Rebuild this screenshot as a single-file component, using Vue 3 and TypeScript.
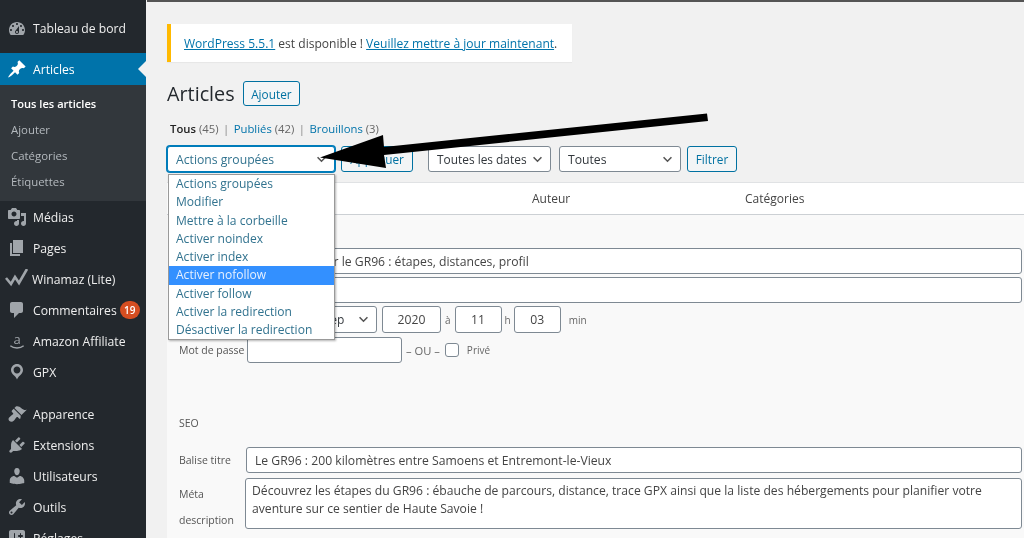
<script setup lang="ts">
interface MenuItem {
  label: string
  icon?: string
  badge?: string
  gapBefore?: boolean
}

const icons: Record<string, string> = {
  dashboard: 'M3.76 16h12.48c1.1-1.37 1.76-3.11 1.76-5 0-4.42-3.58-8-8-8s-8 3.58-8 8c0 1.89.66 3.63 1.76 5zM10 4c.55 0 1 .45 1 1s-.45 1-1 1-1-.45-1-1 .45-1 1-1zM6 6c.55 0 1 .45 1 1s-.45 1-1 1-1-.45-1-1 .45-1 1-1zm8 0c.55 0 1 .45 1 1s-.45 1-1 1-1-.45-1-1 .45-1 1-1zm-5.37 5.55L12 7v6c0 1.1-.9 2-2 2s-2-.9-2-2c0-.57.24-1.08.63-1.45zM4 10c.55 0 1 .45 1 1s-.45 1-1 1-1-.45-1-1 .45-1 1-1zm12 0c.55 0 1 .45 1 1s-.45 1-1 1-1-.45-1-1 .45-1 1-1zm-5 3c0-.55-.45-1-1-1s-1 .45-1 1 .45 1 1 1 1-.45 1-1z',
  pin: 'M10.44 3.02l1.82-1.82 6.36 6.35-1.83 1.82c-1.05-.68-2.48-.57-3.41.36l-.75.75c-.92.93-1.04 2.35-.35 3.41l-1.83 1.82-2.41-2.41-2.8 2.79c-.42.42-3.38 2.71-3.8 2.29s1.86-3.39 2.28-3.81l2.79-2.79L4.1 9.36l1.83-1.82c1.05.69 2.48.57 3.4-.36l.75-.75c.93-.92 1.05-2.35.36-3.41z',
  media: 'M13 11V4c0-.55-.45-1-1-1h-1.67L9 1H5L3.67 3H2c-.55 0-1 .45-1 1v7c0 .55.45 1 1 1h10c.55 0 1-.45 1-1zM7 4.5c1.38 0 2.5 1.12 2.5 2.5S8.38 9.5 7 9.5 4.5 8.38 4.5 7 5.62 4.5 7 4.5zM14 6h5v10.5c0 1.38-1.12 2.5-2.5 2.5S14 17.88 14 16.5s1.12-2.5 2.5-2.5c.17 0 .34.02.5.05V9h-3V6zm-4 8.05V13h2v3.5c0 1.38-1.12 2.5-2.5 2.5S7 17.88 7 16.5 8.12 14 9.5 14c.17 0 .34.02.5.05z',
  page: 'M6 15V2h10v13H6zm-1 1h8v2H3V5h2v11z',
  comment: 'M5 2h9c1.1 0 2 .9 2 2v7c0 1.1-.9 2-2 2h-2l-5 5v-5H5c-1.1 0-2-.9-2-2V4c0-1.1.9-2 2-2z',
  location: 'M10 2C6.69 2 4 4.69 4 8c0 2.02 1.17 3.71 2.53 4.89.43.37 1.18.96 1.85 1.83.74.97 1.41 2.01 1.62 2.71.21-.7.88-1.74 1.62-2.71.67-.87 1.42-1.46 1.85-1.83C14.83 11.71 16 10.02 16 8c0-3.31-2.69-6-6-6zm0 2.56c1.9 0 3.44 1.54 3.44 3.44S11.9 11.44 10 11.44 6.56 9.9 6.56 8 8.1 4.56 10 4.56z',
  brush: 'M14.48 11.06L7.41 3.99l1.5-1.5c.5-.56 2.3-.47 3.51.32 1.21.8 1.43 1.28 2.91 2.1 1.18.64 2.45 1.26 4.45.85zm-.71.71L6.7 4.7 4.93 6.47c-.39.39-.39 1.02 0 1.41l1.06 1.06c.39.39.39 1.03 0 1.42-.6.6-1.43 1.11-2.21 1.69-.35.26-.7.53-1.01.84C1.43 13.71.96 15.65 2.39 17s3.3.88 4.62-.44c.31-.31.58-.66.84-1.01.58-.78 1.09-1.61 1.69-2.21.39-.39 1.02-.39 1.41 0l1.06 1.06c.39.39 1.02.39 1.41 0z',
  plugin: 'M13.11 4.36L9.87 7.6 8 5.73l3.24-3.24c.35-.34 1.05-.2 1.56.32.52.51.66 1.21.31 1.55zm-8 1.77l.91-1.12 9.01 9.01-1.19.84c-.71.71-2.63 1.16-3.82 1.16H6.14L4.9 17.26c-.59.59-1.54.59-2.12 0-.59-.58-.59-1.53 0-2.12l1.24-1.24v-3.88c0-1.13.4-3.19 1.09-3.89zm7.26 3.97l3.24-3.24c.34-.35 1.04-.21 1.55.31.52.51.66 1.21.31 1.55l-3.24 3.25z',
  user: 'M10 9.25c-2.27 0-2.73-3.44-2.73-3.44C7 4.02 7.82 2 9.97 2c2.16 0 2.98 2.02 2.71 3.81 0 0-.41 3.44-2.68 3.44zm0 2.57L12.72 10c2.39 0 4.52 2.33 4.52 4.53v2.49s-3.65 1.13-7.24 1.13c-3.65 0-7.24-1.13-7.24-1.13v-2.49c0-2.25 1.94-4.48 4.47-4.48z',
  tool: 'M16.68 9.77c-1.34 1.34-3.3 1.67-4.95.99l-5.41 6.52c-.99.99-2.59.99-3.58 0s-.99-2.59 0-3.57l6.52-5.42c-.68-1.65-.35-3.61.99-4.95 1.28-1.28 3.12-1.62 4.72-1.06l-2.89 2.89 2.82 2.82 2.86-2.87c.53 1.58.18 3.39-1.08 4.65zM3.81 16.21c.4.39 1.04.39 1.43 0 .4-.4.4-1.04 0-1.43-.39-.4-1.03-.4-1.43 0-.39.39-.39 1.03 0 1.43z',
  settings: 'M18 16V4c0-1.1-.9-2-2-2H4c-1.1 0-2 .9-2 2v12c0 1.1.9 2 2 2h12c1.1 0 2-.9 2-2zM8 11h1c.55 0 1 .45 1 1s-.45 1-1 1H8v1.5c0 .28-.22.5-.5.5s-.5-.22-.5-.5V13H6c-.55 0-1-.45-1-1s.45-1 1-1h1V5.500c0-.28.22-.5.5-.5s.5.22.5.5V11zm5-2h-1c-.55 0-1-.45-1-1s.45-1 1-1h1V5.500c0-.28.22-.5.5-.5s.5.22.5.5V7h1c.55 0 1 .45 1 1s-.45 1-1 1h-1v5.500c0 .28-.22.5-.5.5s-.5-.22-.5-.5V9z',
}

const lowerMenu: MenuItem[] = [
  { label: 'Médias', icon: 'media' },
  { label: 'Pages', icon: 'page' },
  { label: 'Winamaz (Lite)', icon: 'check' },
  { label: 'Commentaires', icon: 'comment', badge: '19' },
  { label: 'Amazon Affiliate', icon: 'amazon' },
  { label: 'GPX', icon: 'location' },
  { label: 'Apparence', icon: 'brush', gapBefore: true },
  { label: 'Extensions', icon: 'plugin' },
  { label: 'Utilisateurs', icon: 'user' },
  { label: 'Outils', icon: 'tool' },
  { label: 'Réglages', icon: 'settings' },
]

const subMenu = ['Tous les articles', 'Ajouter', 'Catégories', 'Étiquettes']

const bulkOptions = [
  'Actions groupées',
  'Modifier',
  'Mettre à la corbeille',
  'Activer noindex',
  'Activer index',
  'Activer nofollow',
  'Activer follow',
  'Activer la redirection',
  'Désactiver la redirection',
]
</script>

<template>
  <div class="page">
    <aside class="sidebar">
      <a class="menu-item first">
        <svg class="icon" viewBox="0 0 20 20"><path :d="icons.dashboard" /></svg>
        <span>Tableau de bord</span>
      </a>
      <a class="menu-item current">
        <svg class="icon" viewBox="0 0 20 20"><path :d="icons.pin" /></svg>
        <span>Articles</span>
      </a>
      <div class="submenu">
        <a v-for="(s, i) in subMenu" :key="s" :class="{ on: i === 0 }">{{ s }}</a>
      </div>
      <a
        v-for="m in lowerMenu"
        :key="m.label"
        class="menu-item"
        :class="{ spaced: m.gapBefore }"
      >
        <svg v-if="m.icon === 'check'" class="icon wide" viewBox="0 0 24 20">
          <path d="M1 9l5 6 4-7 4 6 8-14" fill="none" stroke="#a0a5aa" stroke-width="2.6" />
        </svg>
        <span v-else-if="m.icon === 'amazon'" class="amazon">
          <b>a</b>
          <svg viewBox="0 0 20 6"><path d="M2 1c4 3.500 12 3.500 16 0" fill="none" stroke="#a0a5aa" stroke-width="1.6" /></svg>
        </span>
        <svg v-else class="icon" viewBox="0 0 20 20"><path :d="icons[m.icon!]" /></svg>
        <span>{{ m.label }}</span>
        <em v-if="m.badge" class="badge">{{ m.badge }}</em>
      </a>
    </aside>

    <main class="content">
      <div class="notice">
        <a>WordPress 5.5.1</a>&nbsp;est disponible ! <a>Veuillez mettre à jour maintenant</a>.
      </div>

      <div class="title-row">
        <h1>Articles</h1>
        <button class="btn">Ajouter</button>
      </div>

      <div class="subsub">
        <b>Tous</b>&nbsp;<i>(45)</i><s>|</s><span class="lnk">Publiés</span>&nbsp;<i>(42)</i><s>|</s><span class="lnk">Brouillons</span>&nbsp;<i>(3)</i>
      </div>

      <div class="tablenav">
        <div class="select focus w-bulk">
          Actions groupées
          <svg viewBox="0 0 12 8"><path d="M1.500 1.500L6 6l4.500-4.500" /></svg>
        </div>
        <button class="btn apply">Appliquer</button>
        <div class="select w-dates">
          Toutes les dates
          <svg viewBox="0 0 12 8"><path d="M1.500 1.500L6 6l4.500-4.500" /></svg>
        </div>
        <div class="select w-cats">
          Toutes
          <svg viewBox="0 0 12 8"><path d="M1.500 1.500L6 6l4.500-4.500" /></svg>
        </div>
        <button class="btn filter">Filtrer</button>
      </div>

      <div class="table-head">
        <span></span>
        <span>Auteur</span>
        <span>Catégories</span>
      </div>

      <div class="edit">
        <div class="row r-title">
          <label></label>
          <input class="field grow" value="Tout savoir sur le GR96 : étapes, distances, profil" />
        </div>
        <div class="row r-slug">
          <label></label>
          <input class="field grow" />
        </div>
        <div class="row r-date">
          <label></label>
          <input class="field w-day" />
          <div class="select w-month">
            09-Sep
            <svg viewBox="0 0 12 8"><path d="M1.500 1.500L6 6l4.500-4.500" /></svg>
          </div>
          <input class="field w-year" value="2020" />
          <small>à</small>
          <input class="field w-time" value="11" />
          <small class="h">h</small>
          <input class="field w-time" value="03" />
          <small class="min">min</small>
        </div>
        <div class="row r-pass">
          <label>Mot de passe</label>
          <input class="field w-pass" />
          <small class="ou">– OU –</small>
          <span class="check"></span>
          <small class="prive">Privé</small>
        </div>

        <div class="seo">SEO</div>

        <div class="row r-seo">
          <label>Balise titre</label>
          <input class="field grow" value="Le GR96 : 200 kilomètres entre Samoens et Entremont-le-Vieux" />
        </div>
        <div class="row r-meta">
          <label class="two-lines"><span>Méta</span><span>description</span></label>
          <textarea class="field grow" rows="2">Découvrez les étapes du GR96 : ébauche de parcours, distance, trace GPX ainsi que la liste des hébergements pour planifier votre aventure sur ce sentier de Haute Savoie !</textarea>
        </div>
      </div>
    </main>

    <!-- opened native dropdown, over the table -->
    <ul class="dropdown">
      <li v-for="o in bulkOptions" :key="o" :class="{ hot: o === 'Activer nofollow' }">{{ o }}</li>
    </ul>

    <!-- hand-drawn arrow added on top of the screenshot -->
    <svg class="arrow" viewBox="0 0 1024 538">
      <path d="M707 113.500L708 121L384 155L386 168L320 157.500L383 135L384 147z" fill="#000" />
    </svg>
  </div>
</template>

<style scoped>
.page {
  position: relative;
  display: flex;
  width: 1024px;
  height: 538px;
  overflow: hidden;
  background: #f1f1f1;
  font-family: "Open Sans", "Liberation Sans", sans-serif;
  font-size: 12.2px;
  color: #444;
  filter: blur(0.3px);
}

/* sidebar */
.sidebar {
  width: 146px;
  flex: none;
  background: #23282d;
  color: #eee;
  padding-top: 13px;
}
.menu-item {
  position: relative;
  display: flex;
  align-items: center;
  height: 31px;
  padding-top: 1px;
  box-sizing: border-box;
  color: #eee;
}
.menu-item.first {
  padding-top: 0;
  margin-bottom: 9px;
}
.menu-item.spaced {
  margin-top: 11px;
}
.menu-item.current {
  height: 32px;
  padding-top: 0;
  background: #0073aa;
  color: #fff;
}
.menu-item.current::after {
  content: "";
  position: absolute;
  right: 0;
  top: 8px;
  border: 8px solid transparent;
  border-right-color: #f1f1f1;
  border-left-width: 0;
}
.icon {
  width: 20px;
  height: 20px;
  margin: 0 6px 0 7px;
  flex: none;
  fill: #a0a5aa;
}
.current .icon {
  fill: #fff;
}
.icon.wide {
  width: 24px;
  margin: 0 3px 0 5px;
}
.amazon {
  width: 20px;
  margin: 0 6px 0 7px;
  display: flex;
  flex-direction: column;
  align-items: center;
  line-height: 12px;
  color: #a0a5aa;
  font-size: 13px;
}
.amazon b {
  font-weight: 400;
}
.amazon svg {
  width: 18px;
  height: 5px;
}
.badge {
  margin-left: 3px;
  width: 20px;
  height: 18px;
  border-radius: 9px;
  background: #d54e21;
  color: #fff;
  font-size: 10px;
  font-style: normal;
  font-weight: 600;
  line-height: 18px;
  text-align: center;
}
.submenu {
  background: #32373c;
  height: 116px;
  padding: 6px 0 6px 11px;
  box-sizing: border-box;
  display: flex;
  flex-direction: column;
}
.submenu a {
  height: 26px;
  line-height: 25px;
  font-size: 11.4px;
  color: #b4b9be;
}
.submenu a.on {
  color: #fff;
  font-size: 11.1px;
  font-weight: 600;
}

/* main column */
.content {
  flex: 1;
  min-width: 0;
  margin-left: 1px;
  padding-left: 20px;
  border-top: 2px solid #555;
  box-sizing: border-box;
}
a,
.lnk {
  color: #0073aa;
}
.notice a {
  text-decoration: underline;
}
.notice {
  width: 405px;
  height: 38px;
  margin-top: 22px;
  box-sizing: border-box;
  display: flex;
  align-items: center;
  padding-left: 13px;
  background: #fff;
  border-left: 4px solid #ffb900;
  box-shadow: 0 1px 1px rgba(0, 0, 0, 0.04);
  font-size: 12.05px;
  white-space: pre;
}
.title-row {
  display: flex;
  align-items: center;
  height: 25px;
  margin-top: 19px;
  gap: 8px;
}
h1 {
  margin: 0;
  font-size: 19.8px;
  font-weight: 400;
  color: #23282d;
}
.btn {
  height: 25px;
  padding: 0 7.5px;
  border: 1px solid #0071a1;
  border-radius: 3px;
  background: #f3f5f6;
  color: #0071a1;
  font: inherit;
  font-size: 11.8px;
}
.subsub {
  display: flex;
  align-items: center;
  height: 16px;
  margin-top: 14px;
  padding-left: 3px;
  font-size: 11.3px;
  white-space: pre;
}
.subsub b {
  font-weight: 600;
  color: #222;
}
.subsub i {
  font-style: normal;
  color: #666;
}
.subsub s {
  margin: 0 4.5px;
  text-decoration: none;
  color: #888;
}
.tablenav {
  display: flex;
  margin-top: 10px;
}
.select {
  position: relative;
  box-sizing: border-box;
  height: 26px;
  line-height: 25px;
  padding-left: 8px;
  background: #fff;
  border: 1px solid #7e8993;
  border-radius: 3px;
  color: #32373c;
  white-space: nowrap;
}
.select svg {
  position: absolute;
  right: 7px;
  top: 9px;
  width: 11px;
  height: 7px;
  fill: none;
  stroke: #555;
  stroke-width: 1.8;
}
.select.focus {
  border-color: #007cba;
  color: #32738f;
  box-shadow: 0 0 0 1px #007cba;
}
.w-bulk {
  width: 168px;
}
.apply {
  width: 72px;
  height: 26px;
  margin-left: 6px;
  padding: 0;
}
.w-dates {
  width: 123px;
  margin-left: 15px;
  font-size: 11.9px;
}
.w-cats {
  width: 122px;
  margin-left: 8px;
}
.filter {
  width: 50px;
  height: 26px;
  margin-left: 6px;
  padding: 0;
}
.table-head {
  display: grid;
  grid-template-columns: 365px 213px 1fr;
  align-items: center;
  height: 33px;
  margin-top: 10px;
  background: #fff;
  border-top: 1px solid #e0e2e4;
  border-bottom: 1px solid #ccd0d4;
  box-sizing: border-box;
  font-size: 12px;
}

/* inline edit */
.edit {
  height: 324px;
  padding: 33px 2px 0 12px;
  background: #f9f9f9;
  box-sizing: border-box;
}
.row {
  display: flex;
  align-items: center;
}
.row label {
  width: 67px;
  flex: none;
  font-size: 10.5px;
  color: #555;
}
.field {
  box-sizing: border-box;
  height: 26px;
  padding: 0 7px;
  background: #fff;
  border: 1px solid #7e8993;
  border-radius: 3px;
  color: #444;
  font: inherit;
  font-size: 12.2px;
}
.grow {
  flex: 1;
  min-width: 0;
}
.r-slug {
  margin-top: 3px;
}
.r-date {
  margin-top: 3px;
  height: 27px;
}
.r-date .field,
.r-date .select {
  height: 27px;
}
.w-day {
  width: 46px;
}
.w-month {
  width: 80px;
  margin-left: 5px;
  font-size: 12px;
}
.w-year {
  width: 59px;
  margin-left: 5px;
  text-align: center;
}
.w-time {
  width: 47px;
  text-align: center;
}
small {
  font-size: 10px;
  color: #666;
  margin: 0 4px 0 4px;
}
small.h {
  margin: 0 3px 0 3px;
}
small.min {
  margin-left: 8px;
}
.r-pass {
  margin-top: 4px;
}
.w-pass {
  width: 155px;
  margin-left: 1px;
}
small.ou {
  margin: 0 0 0 4px;
  font-size: 11.2px;
}
.check {
  width: 14px;
  height: 14px;
  margin-left: 5px;
  background: #fff;
  border: 1px solid #7e8993;
  border-radius: 3px;
  box-sizing: border-box;
}
small.prive {
  margin-left: 8px;
}
.seo {
  margin-top: 52px;
  height: 16px;
  line-height: 16px;
  font-size: 10.5px;
  color: #555;
}
.r-seo {
  margin-top: 16px;
}
.r-meta {
  margin-top: 5px;
  align-items: flex-start;
}
.row .two-lines {
  display: flex;
  flex-direction: column;
  gap: 12px;
  padding-top: 9px;
}
textarea.field {
  height: 51px;
  padding: 3px 6px;
  font-size: 12.15px;
  line-height: 18px;
  resize: none;
  overflow: hidden;
  margin-left: -1px;
}
.r-seo .field {
  padding-left: 8px;
}

/* overlays */
.dropdown {
  position: absolute;
  left: 168px;
  top: 174px;
  width: 167px;
  height: 166px;
  margin: 0;
  padding: 0;
  box-sizing: border-box;
  list-style: none;
  background: #fff;
  border: 1px solid #999;
  box-shadow: 1px 1px 2px rgba(0, 0, 0, 0.3);
  color: #32738f;
  font-size: 12.05px;
}
.dropdown li {
  height: 18.3px;
  line-height: 18px;
  padding-left: 7px;
  white-space: nowrap;
}
.dropdown .hot {
  background: #3390ff;
  color: #e6f0ff;
}
.arrow {
  position: absolute;
  inset: 0;
  width: 1024px;
  height: 538px;
  pointer-events: none;
}
</style>

<style>
html,
body {
  margin: 0;
  background: #f1f1f1;
}
</style>
